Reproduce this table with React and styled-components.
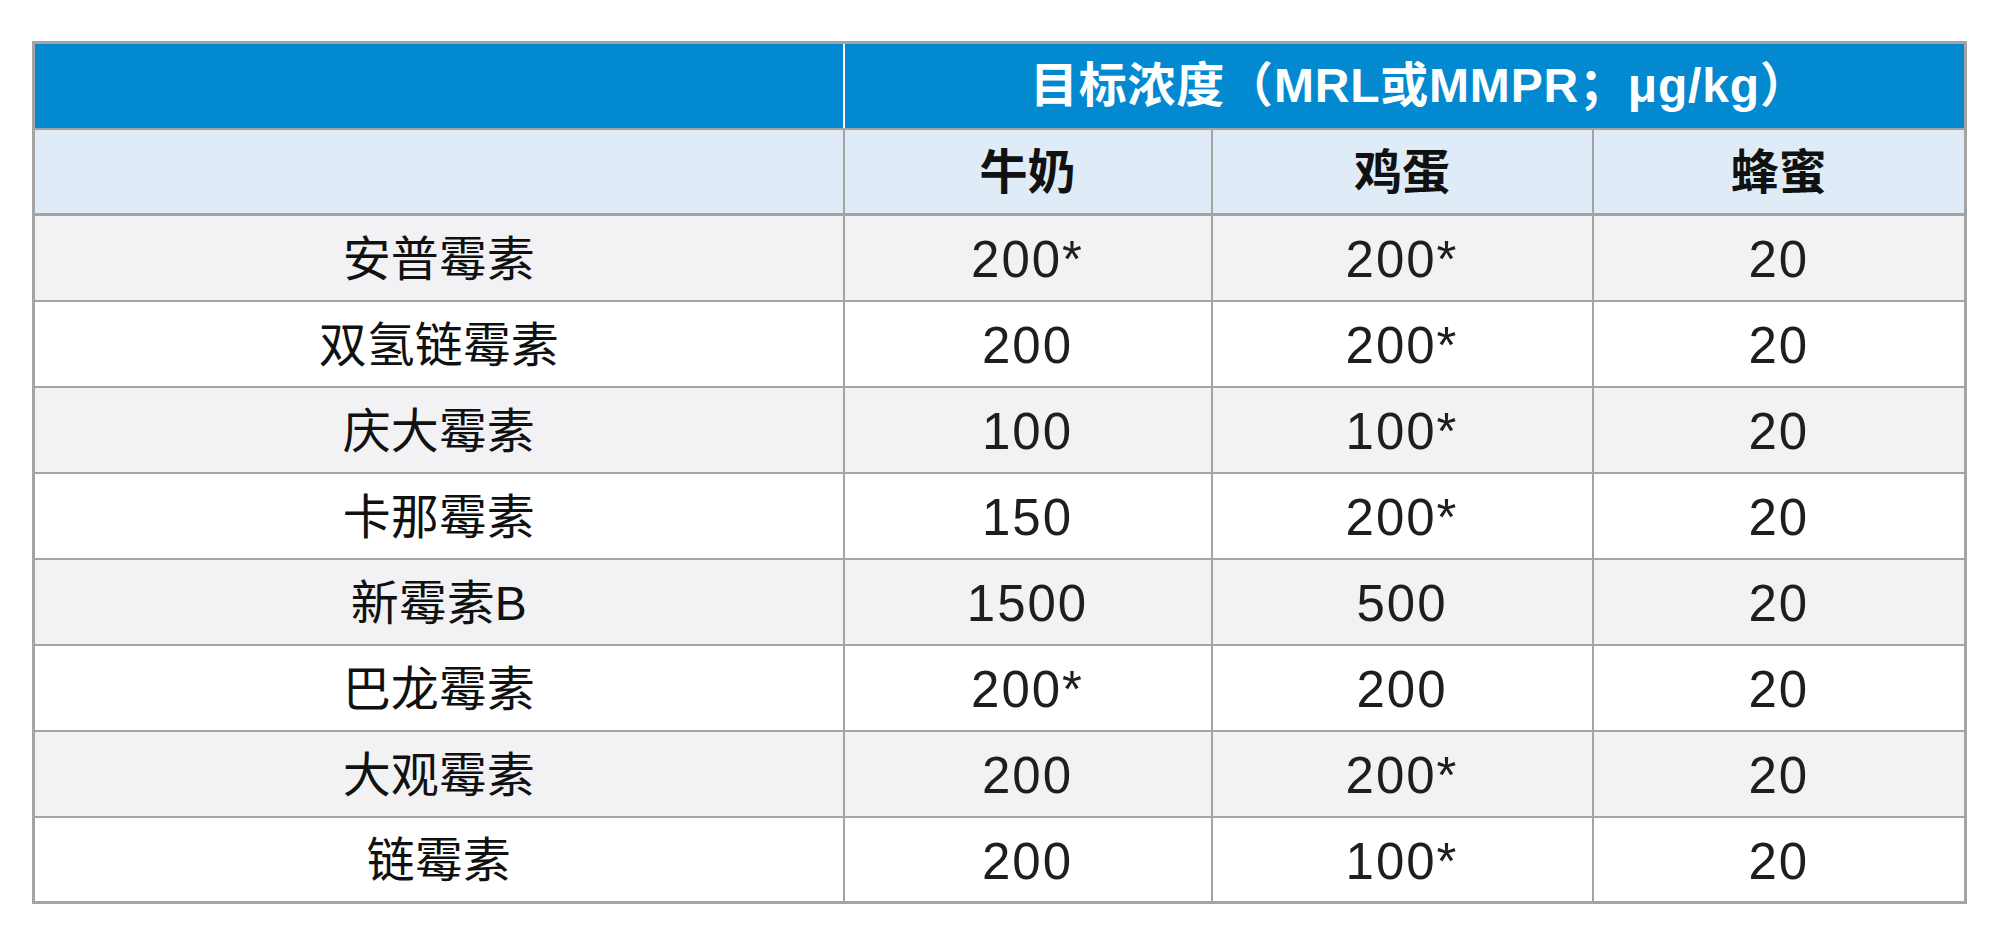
import React from 'react';
import styled, { createGlobalStyle, css } from 'styled-components';

const rows = [
  ['安普霉素', '200*', '200*', '20'],
  ['双氢链霉素', '200', '200*', '20'],
  ['庆大霉素', '100', '100*', '20'],
  ['卡那霉素', '150', '200*', '20'],
  ['新霉素B', '1500', '500', '20'],
  ['巴龙霉素', '200*', '200', '20'],
  ['大观霉素', '200', '200*', '20'],
  ['链霉素', '200', '100*', '20'],
];

const App = () => {
  return (
    <>
      <GlobalStyle />
      <Page>
        <Table>
          <colgroup>
            <col style={{ width: 810 }} />
            <col style={{ width: 368 }} />
            <col style={{ width: 381 }} />
            <col style={{ width: 373 }} />
          </colgroup>
          <thead>
            <Row>
              <Cell Blue Divider />
              <Cell Blue colSpan={3}>目标浓度（MRL或MMPR；μg/kg）</Cell>
            </Row>
            <Row>
              <Cell Light />
              <Cell Light Bold>牛奶</Cell>
              <Cell Light Bold>鸡蛋</Cell>
              <Cell Light Bold>蜂蜜</Cell>
            </Row>
          </thead>
          <tbody>
            {rows.map((r, i) => (
              <Row key={r[0]} Grey={i % 2 === 0}>
                <Cell Name>{r[0]}</Cell>
                <Cell>{r[1]}</Cell>
                <Cell>{r[2]}</Cell>
                <Cell>{r[3]}</Cell>
              </Row>
            ))}
          </tbody>
        </Table>
      </Page>
    </>
  );
};

const GlobalStyle = createGlobalStyle`
  body {
    margin: 0;
    background: #ffffff;
    font-family: "Liberation Sans", "Noto Sans CJK SC", sans-serif;
  }
`;

const Page = styled.div`
  padding: 41px 0 0 32px;
`;

const Table = styled.table`
  border-collapse: collapse;
  table-layout: fixed;
  width: 1933px;
  border: 3px solid #a4a4a4;
`;

const Row = styled.tr`
  height: 86px;
  background: ${props => (props.Grey ? '#f2f2f4' : '#ffffff')};
`;

const Cell = styled.td`
  padding: 4px 0 0 0;
  border: 2px solid #a4a4a4;
  text-align: center;
  vertical-align: middle;
  color: #1e1e1e;
  font-size: 51px;
  letter-spacing: 2px;
  line-height: 1;

  ${props => props.Name && css`
    font-size: 48px;
    letter-spacing: 0;
    color: #111111;
  `}

  ${props => props.Blue && css`
    background: #0389d0;
    color: #ffffff;
    font-size: 48px;
    font-weight: bold;
    letter-spacing: 0.8px;
    border-top-width: 3px;
    padding: 0 0 0 30px;
  `}

  ${props => props.Divider && css`
    border-right: 2px solid #ffffff;
  `}

  ${props => props.Light && css`
    background: #dfebf7;
    border-bottom-width: 3px;
  `}

  ${props => props.Bold && css`
    font-size: 48px;
    font-weight: bold;
    letter-spacing: 0;
    color: #111111;
  `}
`;

export default App;
